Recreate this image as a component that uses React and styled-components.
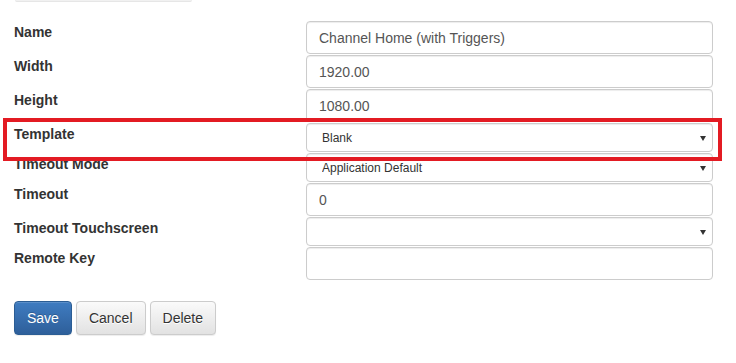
import styled, { createGlobalStyle } from "styled-components";

const GlobalStyle = createGlobalStyle`
  html, body {
    margin: 0;
    padding: 0;
    background: #fff;
  }
  body {
    font-family: "Liberation Sans", Arial, sans-serif;
    font-size: 14px;
    color: #333;
  }
  * {
    box-sizing: border-box;
  }
`;

const Page = styled.div`
  position: relative;
  width: 736px;
  height: 363px;
  padding-left: 14px;
  overflow: hidden;
`;

const TabEdge = styled.div`
  margin-left: 1px;
  width: 177px;
  height: 2px;
  background: #f1f1f1;
  border-bottom: 1px solid #e6e6e6;
  border-radius: 0 0 3px 3px;
  margin-bottom: 19px;
`;

const Form = styled.form`
  display: flex;
  flex-direction: column;
  gap: 1px;
`;

const Row = styled.div`
  display: grid;
  grid-template-columns: 292px 407px;
  align-items: start;
`;

const Label = styled.label`
  padding-top: 1px;
  font-weight: bold;
  font-size: 14px;
  line-height: 20px;
  color: #333;
`;

const TextInput = styled.input`
  display: block;
  width: 100%;
  height: 33px;
  padding: 6px 12px;
  font-family: inherit;
  font-size: 14px;
  line-height: 20px;
  color: #555;
  background: #fff;
  border: 1px solid #ccc;
  border-radius: 4px;
  box-shadow: inset 0 1px 1px rgba(0, 0, 0, 0.075);
  outline: none;
`;

const SelectWrap = styled.div`
  position: relative;
  width: 100%;
`;

const Select = styled.select`
  display: block;
  width: 100%;
  height: 29px;
  padding: 0 24px 0 15px;
  font-family: inherit;
  font-size: 12px;
  color: #333;
  background: #fff;
  border: 1px solid #ccc;
  border-radius: 4px;
  box-shadow: inset 0 1px 1px rgba(0, 0, 0, 0.075);
  appearance: none;
  -webkit-appearance: none;
  outline: none;
`;

const Caret = styled.span`
  position: absolute;
  right: 7px;
  top: 50%;
  margin-top: -2px;
  width: 0;
  height: 0;
  border-left: 3px solid transparent;
  border-right: 3px solid transparent;
  border-top: 5px solid #333;
  pointer-events: none;
`;

const Actions = styled.div`
  display: flex;
  gap: 4px;
  margin-top: 21px;
`;

const Button = styled.button`
  height: 34px;
  padding: 6px 12px;
  font-family: inherit;
  font-size: 14px;
  line-height: 20px;
  border-radius: 4px;
  border: 1px solid ${({ $primary }) => ($primary ? "#2b5d94" : "#ccc")};
  color: ${({ $primary }) => ($primary ? "#fff" : "#333")};
  background-image: ${({ $primary }) =>
    $primary
      ? "linear-gradient(to bottom, #3f7cc1 0, #2e5f9a 100%)"
      : "linear-gradient(to bottom, #fafafa 0, #e2e2e2 100%)"};
  text-shadow: ${({ $primary }) =>
    $primary ? "0 -1px 0 rgba(0,0,0,0.2)" : "0 1px 0 #fff"};
  box-shadow: inset 0 1px 0 rgba(255, 255, 255, 0.15),
    0 1px 1px rgba(0, 0, 0, 0.075);
  cursor: pointer;
`;

const Highlight = styled.div`
  position: absolute;
  left: 3px;
  top: 118px;
  width: 719px;
  height: 43px;
  border: 4px solid #e31b23;
  pointer-events: none;
`;

const fields = [
  { label: "Name", type: "text", value: "Channel Home (with Triggers)" },
  { label: "Width", type: "text", value: "1920.00" },
  { label: "Height", type: "text", value: "1080.00" },
  { label: "Template", type: "select", value: "Blank" },
  { label: "Timeout Mode", type: "select", value: "Application Default" },
  { label: "Timeout", type: "text", value: "0" },
  { label: "Timeout Touchscreen", type: "select", value: "" },
  { label: "Remote Key", type: "text", value: "" },
];

function Field({ type, value }) {
  if (type === "select") {
    return (
      <SelectWrap>
        <Select defaultValue={value}>
          <option value={value}>{value}</option>
        </Select>
        <Caret />
      </SelectWrap>
    );
  }
  return <TextInput type="text" defaultValue={value} />;
}

export default function App() {
  return (
    <>
      <GlobalStyle />
      <Page>
        <TabEdge />
        <Form onSubmit={(e) => e.preventDefault()}>
          {fields.map((f) => (
            <Row key={f.label}>
              <Label>{f.label}</Label>
              <Field type={f.type} value={f.value} />
            </Row>
          ))}
        </Form>
        <Actions>
          <Button $primary>Save</Button>
          <Button>Cancel</Button>
          <Button>Delete</Button>
        </Actions>
        <Highlight />
      </Page>
    </>
  );
}
